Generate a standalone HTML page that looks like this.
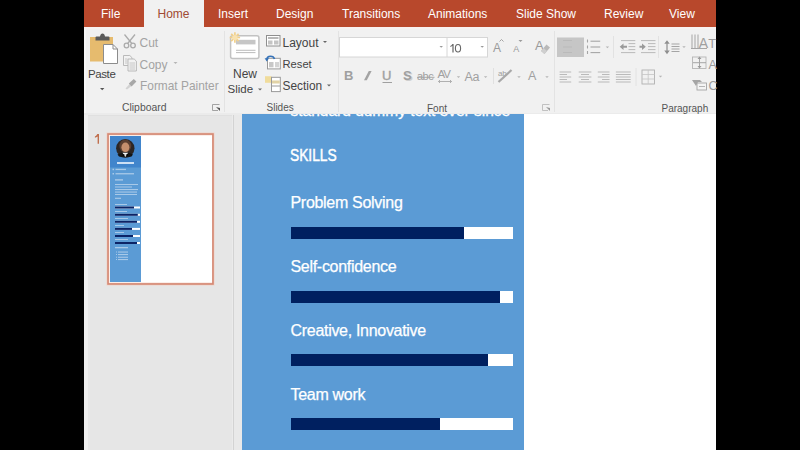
<!DOCTYPE html>
<html><head><meta charset="utf-8">
<style>
*{margin:0;padding:0;box-sizing:border-box}
html,body{width:800px;height:450px;overflow:hidden;background:#000}
body{position:relative;font-family:"Liberation Sans",sans-serif}
.a{position:absolute;white-space:nowrap}
#app{position:absolute;left:84px;top:0;width:632px;height:450px;background:#e6e6e6;overflow:hidden}
#tabs{position:absolute;left:84px;top:0;width:632px;height:27px;background:#b8482c}
.tab{position:absolute;z-index:2;top:7px;font-size:12px;line-height:14px;color:#fff}
#home{position:absolute;left:144px;top:0;width:60px;height:29px;background:#f1f1f1;z-index:1}
#ribbon{position:absolute;left:84px;top:27px;width:632px;height:86px;background:#f1f1f1;border-top:2px solid #f8f1f0}
.rt{font-size:12px;line-height:14px;color:#444}
.dis{color:#a3a3a3}
.gl{font-size:10px;line-height:12px;color:#555}
#pane{position:absolute;left:84px;top:114px;width:150px;height:336px;background:#e6e6e6}
#slide{position:absolute;left:242px;top:114px;width:474px;height:336px;background:#fff}
#blue{position:absolute;left:0;top:0;width:282px;height:336px;background:#5b9bd5;overflow:hidden}
.st{font-size:16px;line-height:18px;color:#fff;letter-spacing:-0.3px;-webkit-text-stroke:0.25px #fff}
.bar{position:absolute;left:49px;width:222px;height:12px;background:#fff}
.bar i{position:absolute;left:0;top:0;height:12px;background:#002060}
svg{position:absolute;left:0;top:0}
</style></head><body>
<div id="app"></div>
<div id="tabs"></div>
<div id="home"></div>
<div class="a tab" style="left:101px">File</div>
<div class="a tab" style="left:157.5px;color:#a04a33">Home</div>
<div class="a tab" style="left:218px">Insert</div>
<div class="a tab" style="left:276px">Design</div>
<div class="a tab" style="left:342px">Transitions</div>
<div class="a tab" style="left:428px">Animations</div>
<div class="a tab" style="left:516px">Slide Show</div>
<div class="a tab" style="left:604px">Review</div>
<div class="a tab" style="left:669px">View</div>

<div id="ribbon"></div><div class="a" style="left:84px;top:29px;width:2px;height:84px;background:#f6f6f6"></div>
<div id="pane"></div><div class="a" style="left:84px;top:113px;width:632px;height:2px;background:#ebebeb"></div><div class="a" style="left:84px;top:115px;width:632px;height:1px;background:#e0e0e0"></div><div class="a" style="left:84px;top:115px;width:4px;height:335px;background:#efefef"></div>
<div class="a" style="left:232px;top:115px;width:1px;height:335px;background:#ebebeb"></div><div class="a" style="left:233px;top:115px;width:1px;height:335px;background:#d3d3d3"></div><div class="a" style="left:234px;top:115px;width:8px;height:335px;background:#e9e9e9"></div>
<div id="slide">
  <div id="blue">
    <div class="a st" style="left:48.5px;top:-12px;font-size:15.5px;letter-spacing:0;-webkit-text-stroke:0.3px #fff">standard dummy text ever since</div>
    <div class="a st" style="left:47.8px;top:33px;font-size:16px;letter-spacing:0;-webkit-text-stroke:0.45px #fff;transform:scaleX(0.86);transform-origin:0 0">SKILLS</div>
    <div class="a st" style="left:48.5px;top:80px">Problem Solving</div>
    <div class="bar" style="top:113px"><i style="width:173px"></i></div>
    <div class="a st" style="left:48.5px;top:144px">Self-confidence</div>
    <div class="bar" style="top:177px"><i style="width:209px"></i></div>
    <div class="a st" style="left:48.5px;top:208px">Creative, Innovative</div>
    <div class="bar" style="top:240px"><i style="width:197px"></i></div>
    <div class="a st" style="left:48.5px;top:272px">Team work</div>
    <div class="bar" style="top:304px"><i style="width:149px"></i></div>
  </div>
</div>

<!-- ribbon text -->
<div class="a rt" style="left:88px;top:67px;font-size:11.5px;letter-spacing:-0.4px">Paste</div>
<div class="a rt dis" style="left:139.5px;top:36px">Cut</div>
<div class="a rt dis" style="left:139.5px;top:58px">Copy</div>
<div class="a rt dis" style="left:140px;top:79px;font-size:11.9px">Format Painter</div>
<div class="a gl" style="left:122px;top:102px;font-size:10.4px">Clipboard</div>

<div class="a rt" style="left:233px;top:67px">New</div>
<div class="a rt" style="left:227.5px;top:81.5px;font-size:11.5px">Slide</div>
<div class="a rt" style="left:282.5px;top:36px">Layout</div>
<div class="a rt" style="left:282.5px;top:57px;font-size:11.2px">Reset</div>
<div class="a rt" style="left:282.5px;top:79px;font-size:11.9px">Section</div>
<div class="a gl" style="left:266.5px;top:102px">Slides</div>

<div class="a gl" style="left:427px;top:102.5px">Font</div>
<div class="a gl" style="left:661.5px;top:102.5px">Paragraph</div>

<svg width="800" height="450" viewBox="0 0 800 450">
<g stroke="#e3e3e3" stroke-width="1">
<line x1="224.5" y1="31" x2="224.5" y2="112"/>
<line x1="338.5" y1="31" x2="338.5" y2="112"/>
<line x1="554.5" y1="31" x2="554.5" y2="112"/>
</g>
<!-- Paste -->
<rect x="90" y="37" width="23" height="24.5" fill="#e6bb6e"/>
<path d="M95.5 40.5 L95.5 37.5 Q95.5 36.5 96.5 36.5 L100 36.5 Q100.5 33.5 102.5 33.5 Q104.5 33.5 105 36.5 L108.5 36.5 Q109.5 36.5 109.5 37.5 L109.5 40.5 Z" fill="#5a5a5a"/>
<path d="M103.5 44.5 L113 44.5 L117.5 49 L117.5 63.5 L103.5 63.5 Z" fill="#fff" stroke="#8c8c8c" stroke-width="1"/>
<path d="M113 44.5 L113 49 L117.5 49" fill="none" stroke="#8c8c8c" stroke-width="1"/>
<path d="M100 88 L104.4 88 L102.2 90.2 Z" fill="#555"/>
<!-- Cut -->
<g fill="none" stroke="#ababab" stroke-width="1.3">
<circle cx="126.5" cy="45.5" r="2.3"/>
<circle cx="133" cy="45.5" r="2.3"/>
<line x1="124.5" y1="34.5" x2="131.8" y2="43.5"/>
<line x1="135" y1="34.5" x2="127.7" y2="43.5"/>
</g>
<!-- Copy -->
<g fill="#f2f2f2" stroke="#b3b3b3" stroke-width="0.9">
<path d="M123.5 55.5 L129.8 55.5 L132 57.7 L132 65.5 L123.5 65.5 Z"/>
<path d="M128 59 L134.2 59 L136.4 61.2 L136.4 71 L128 71 Z"/>
</g>
<g stroke="#bdbdbd" stroke-width="0.8"><line x1="125" y1="59" x2="127.5" y2="59"/><line x1="125" y1="61" x2="127.5" y2="61"/><line x1="125" y1="63" x2="127.5" y2="63"/>
<line x1="129.5" y1="63" x2="135" y2="63"/><line x1="129.5" y1="65" x2="135" y2="65"/><line x1="129.5" y1="67" x2="135" y2="67"/><line x1="129.5" y1="69" x2="135" y2="69"/></g>
<path d="M173.5 62 L177.5 62 L175.5 64 Z" fill="#b5b5b5"/>
<!-- Format painter -->
<path d="M125.5 88.5 L129.5 84 L131.5 86 L127 89.5 Z" fill="#d2d2d2"/>
<path d="M128.8 83.5 L133.8 79 L136.4 81.6 L131.6 86.4 Z" fill="#a8a8a8"/>
<!-- clipboard launcher -->
<g fill="none" stroke="#9a9a9a" stroke-width="0.9"><path d="M219.5 104.5 L212.5 104.5 L212.5 110.5 L218 110.5"/></g>
<path d="M216 107 L220 111 L220 108 Z" fill="#555"/>
<!-- New slide -->
<rect x="230.6" y="35.8" width="28.3" height="22.8" rx="2" fill="#fff" stroke="#c2c2c2" stroke-width="1.5"/>
<rect x="236" y="39.8" width="19.5" height="4.6" fill="#c6c6c6"/>
<g stroke="#b4b4b4" stroke-width="0.9"><line x1="236" y1="50.3" x2="255.5" y2="50.3"/><line x1="236" y1="52.6" x2="255.5" y2="52.6"/></g>
<g stroke="#f1d08c" stroke-width="1.7">
<line x1="234.9" y1="32.3" x2="234.9" y2="42.7"/><line x1="229.7" y1="37.5" x2="240.1" y2="37.5"/>
<line x1="231.2" y1="33.8" x2="238.6" y2="41.2"/><line x1="238.6" y1="33.8" x2="231.2" y2="41.2"/>
</g>
<circle cx="234.9" cy="37.5" r="2.6" fill="#f8e2b0"/>
<path d="M258 88.5 L262 88.5 L260 90.5 Z" fill="#666"/>
<!-- Layout icon -->
<rect x="266.5" y="35.5" width="13.5" height="10.5" fill="#fff" stroke="#8f8f8f" stroke-width="1"/>
<rect x="268" y="37" width="10.5" height="2" fill="#b8b8b8"/>
<rect x="268" y="40.5" width="4.5" height="4" fill="#c4c4c4"/>
<rect x="274" y="40.5" width="4.5" height="4" fill="#c4c4c4"/>
<path d="M323 41 L327 41 L325 43 Z" fill="#666"/>
<!-- Reset icon -->
<rect x="267.5" y="58.3" width="12.8" height="10.6" fill="#fff" stroke="#9a9a9a" stroke-width="1"/>
<rect x="269" y="62" width="4.5" height="5.3" fill="#c8c8c8"/>
<rect x="275" y="62" width="4" height="5.3" fill="#d4d4d4"/>
<path d="M266.8 59.5 Q267 56.2 270.5 56.2 Q273.8 56.2 274.5 59" fill="none" stroke="#3572b8" stroke-width="1.6"/>
<path d="M264.6 58.2 L269 58.2 L266.8 61.6 Z" fill="#3572b8"/>
<!-- Section icon -->
<rect x="265" y="76.2" width="6.5" height="6.6" fill="#f0dc9c"/>
<rect x="271.5" y="77.3" width="8.8" height="14.3" fill="#fff" stroke="#9a9a9a" stroke-width="1"/>
<rect x="272" y="80.5" width="7.8" height="3" fill="#e2d3a6"/>
<line x1="271.5" y1="86" x2="280.3" y2="86" stroke="#9a9a9a" stroke-width="1"/>
<path d="M327 84.5 L331 84.5 L329 86.5 Z" fill="#666"/>
<!-- Font name / size boxes -->
<rect x="339.5" y="37.5" width="148" height="19.5" fill="#fff" stroke="#d6d6d6" stroke-width="1"/>
<line x1="447" y1="37.5" x2="447" y2="57" stroke="#d6d6d6" stroke-width="1"/>
<path d="M439.5 46 L443 46 L441.2 47.8 Z" fill="#999"/>
<path d="M480.5 46 L484 46 L482.2 47.8 Z" fill="#999"/>

<path d="M452.4 44 L453.6 44 L453.6 52.5 L452.4 52.5 L452.4 45.8 Q451.4 46.7 450.3 47.1 L450.3 46 Q451.7 45.3 452.4 44 Z" fill="#666"/><ellipse cx="458" cy="48.25" rx="2.6" ry="3.75" fill="none" stroke="#666" stroke-width="1.1"/>
<!-- Font row1 -->
<g font-family="Liberation Sans" fill="#9a9a9a">
<text x="493" y="51.5" font-size="12">A</text>
<text x="513.3" y="51.5" font-size="9">A</text>
<text x="535" y="50" font-size="13">A</text>
</g>
<path d="M499.5 41.5 L501.5 39.5 L503.5 41.5" fill="none" stroke="#9a9a9a" stroke-width="0.9"/>
<path d="M518.5 40 L522.5 40 L520.5 42 Z" fill="#9a9a9a"/>
<path d="M541 51 L546.5 44.5 L550 47.5 L544.5 54 Z" fill="#b9b9b9"/>
<path d="M541 51 L543.5 48 L547 51 L544.5 54 Z" fill="#cfcfcf"/>
<!-- Font row2 -->
<g font-family="Liberation Sans" fill="#a0a0a0">
<text x="344" y="80.3" font-size="13" font-weight="bold">B</text>

<text x="382" y="80.3" font-size="13" stroke="#a0a0a0" stroke-width="0.4">U</text>
<text x="404.3" y="81.3" font-size="13" font-weight="bold" fill="#cfcfcf">S</text>
<text x="403" y="80.3" font-size="13" font-weight="bold">S</text>
<text x="417" y="80.3" font-size="11" letter-spacing="-0.5">abc</text>
<text x="437.5" y="78.3" font-size="11.5" letter-spacing="-1">AV</text>
<text x="464.5" y="80.8" font-size="12.5" letter-spacing="-0.3">Aa</text>
<text x="498" y="76" font-size="8" letter-spacing="-0.3">ab</text>
<text x="528" y="80.4" font-size="12.5">A</text>
</g>
<path d="M364 80.3 L366.8 80.3 L371.6 71 L368.8 71 Z" fill="#a3a3a3"/>
<line x1="382.5" y1="82.5" x2="392" y2="82.5" stroke="#a0a0a0" stroke-width="1"/>
<line x1="417" y1="77.3" x2="434.5" y2="77.3" stroke="#a0a0a0" stroke-width="0.9"/>
<path d="M438.5 81.5 L451.5 81.5 M440 80 L438.5 81.5 L440 83 M450 80 L451.5 81.5 L450 83" fill="none" stroke="#a8a8a8" stroke-width="0.9"/>
<path d="M498.5 82 L511.5 70" stroke="#a8a8a8" stroke-width="2.2"/>
<g fill="#b5b5b5">
<path d="M456.8 76.2 L460.2 76.2 L458.5 78 Z"/>
<path d="M483.9 76.2 L487.3 76.2 L485.6 78 Z"/>
<path d="M517.3 76.2 L520.7 76.2 L519 78 Z"/>
<path d="M545.3 76.2 L548.7 76.2 L547 78 Z"/>
</g>
<line x1="493.5" y1="68" x2="493.5" y2="84" stroke="#e0e0e0" stroke-width="1"/>
<g fill="none" stroke="#b5b5b5" stroke-width="0.8"><path d="M549.5 104.5 L542.5 104.5 L542.5 110.5 L548 110.5"/></g>
<path d="M546 107 L550 111 L550 108 Z" fill="#999"/>
<!-- Paragraph row1 -->
<rect x="557" y="37.5" width="27" height="19.5" fill="#c6c6c6"/>
<g stroke="#b8b8b8" stroke-width="0.8"><line x1="563" y1="40.5" x2="572" y2="40.5"/><line x1="563" y1="47" x2="572" y2="47"/><line x1="563" y1="52.5" x2="572" y2="52.5"/></g>
<g stroke="#a5a5a5" stroke-width="1.1">
<line x1="590.5" y1="41.2" x2="600.2" y2="41.2"/><line x1="590.5" y1="47" x2="600.2" y2="47"/><line x1="590.5" y1="52.6" x2="600.2" y2="52.6"/>
<line x1="587.5" y1="39.5" x2="587.5" y2="42.5"/><line x1="587.5" y1="45.5" x2="587.5" y2="48.5"/><line x1="587.5" y1="51" x2="587.5" y2="54"/>
</g>
<path d="M605.7 46.5 L609.1 46.5 L607.4 48.3 Z" fill="#b5b5b5"/>
<line x1="613.5" y1="36" x2="613.5" y2="58" stroke="#e2e2e2" stroke-width="1"/>
<g stroke="#b3b3b3" stroke-width="0.9">
<line x1="621" y1="40.6" x2="635.3" y2="40.6"/><line x1="628.5" y1="43.6" x2="635.3" y2="43.6"/><line x1="628.5" y1="46.6" x2="635.3" y2="46.6"/><line x1="628.5" y1="49.6" x2="635.3" y2="49.6"/><line x1="621" y1="52.6" x2="635.3" y2="52.6"/>
<line x1="641" y1="40.6" x2="655.5" y2="40.6"/><line x1="648" y1="43.6" x2="655.5" y2="43.6"/><line x1="648" y1="46.6" x2="655.5" y2="46.6"/><line x1="648" y1="49.6" x2="655.5" y2="49.6"/><line x1="641" y1="52.6" x2="655.5" y2="52.6"/>
</g>
<path d="M619.7 46.7 L623.5 43.5 L623.5 45.7 L627 45.7 L627 47.7 L623.5 47.7 L623.5 49.9 Z" fill="#9a9a9a"/>
<path d="M645.8 46.7 L642 43.5 L642 45.7 L639.5 45.7 L639.5 47.7 L642 47.7 L642 49.9 Z" fill="#9a9a9a"/>
<line x1="658.5" y1="36" x2="658.5" y2="58" stroke="#e2e2e2" stroke-width="1"/>
<path d="M664.3 43.8 L667 40.2 L669.7 43.8 Z M664.3 50.6 L667 54.3 L669.7 50.6 Z" fill="#8e8e8e"/>
<g stroke="#a5a5a5" stroke-width="1">
<line x1="667" y1="43" x2="667" y2="51.5" stroke="#959595" stroke-width="1.3"/>
<line x1="671.5" y1="44" x2="679.5" y2="44"/><line x1="671.5" y1="46.5" x2="679.5" y2="46.5"/><line x1="671.5" y1="49" x2="679.5" y2="49"/><line x1="671.5" y1="51.5" x2="679.5" y2="51.5"/>
</g>
<path d="M682.3 46.2 L685.7 46.2 L684 48 Z" fill="#b5b5b5"/>
<!-- text direction -->
<g stroke="#a5a5a5" stroke-width="1">
<line x1="692" y1="34.5" x2="692" y2="48"/><line x1="695" y1="34.5" x2="695" y2="48"/><line x1="698" y1="34.5" x2="698" y2="48"/>
<line x1="691" y1="48.5" x2="707" y2="48.5"/>
</g>
<text x="698.8" y="48" font-family="Liberation Sans" font-size="14" fill="#a0a0a0">A</text>
<text x="708.3" y="47.5" font-family="Liberation Sans" font-size="13" fill="#9a9a9a">T</text>
<!-- align text -->
<rect x="692.5" y="57" width="13.5" height="11.5" fill="none" stroke="#b5b5b5" stroke-width="0.9"/>
<g stroke="#a5a5a5" stroke-width="1"><line x1="699.5" y1="57" x2="699.5" y2="68"/><line x1="693" y1="62.7" x2="706" y2="62.7"/></g>
<path d="M697.5 59 L699.5 56.5 L701.5 59 Z M697.5 66 L699.5 68.5 L701.5 66 Z" fill="#9a9a9a"/>
<text x="708.5" y="68.5" font-family="Liberation Sans" font-size="12.5" fill="#9a9a9a">A</text>
<!-- Paragraph row2 -->
<g stroke="#b3b3b3" stroke-width="0.9">
<line x1="559.6" y1="72" x2="571.2" y2="72"/><line x1="559.6" y1="74.5" x2="567" y2="74.5"/><line x1="559.6" y1="77" x2="571.2" y2="77"/><line x1="559.6" y1="79.5" x2="567" y2="79.5"/><line x1="559.6" y1="82" x2="571.2" y2="82"/>
<line x1="578.7" y1="72" x2="591.4" y2="72"/><line x1="581" y1="74.5" x2="589" y2="74.5"/><line x1="578.7" y1="77" x2="591.4" y2="77"/><line x1="581" y1="79.5" x2="589" y2="79.5"/><line x1="578.7" y1="82" x2="591.4" y2="82"/>
<line x1="597.8" y1="72" x2="609.5" y2="72"/><line x1="602" y1="74.5" x2="609.5" y2="74.5"/><line x1="597.8" y1="77" x2="609.5" y2="77"/><line x1="602" y1="79.5" x2="609.5" y2="79.5"/><line x1="597.8" y1="82" x2="609.5" y2="82"/>
<line x1="615.9" y1="72" x2="630.7" y2="72"/><line x1="615.9" y1="74.5" x2="630.7" y2="74.5"/><line x1="615.9" y1="77" x2="630.7" y2="77"/><line x1="615.9" y1="79.5" x2="630.7" y2="79.5"/><line x1="615.9" y1="82" x2="630.7" y2="82"/>
</g>
<line x1="636" y1="68" x2="636" y2="86" stroke="#e2e2e2" stroke-width="1"/>
<rect x="642" y="70" width="12.5" height="14" fill="none" stroke="#b0b0b0" stroke-width="0.9"/>
<g stroke="#c5c5c5" stroke-width="0.8"><line x1="648.2" y1="70" x2="648.2" y2="84"/><line x1="642" y1="74.5" x2="654.5" y2="74.5"/><line x1="642" y1="79" x2="654.5" y2="79"/></g>
<path d="M658.8 75.7 L662.2 75.7 L660.5 77.5 Z" fill="#b5b5b5"/>
<!-- smartart -->
<path d="M692 80 L700 80 L702 82 L698 82 L696 86 Z" fill="#a5a5a5"/>
<rect x="697" y="83" width="9.5" height="7" fill="#f4f4f4" stroke="#a5a5a5" stroke-width="0.9"/>
<line x1="699" y1="86.5" x2="705" y2="86.5" stroke="#a5a5a5" stroke-width="0.8"/>
<text x="708.5" y="89.5" font-family="Liberation Sans" font-size="12.5" fill="#9a9a9a">C</text>

<!-- thumbnail -->
<rect x="106.5" y="132.5" width="108" height="153" fill="#f0d2c8"/><rect x="107.2" y="133.2" width="106.6" height="151.6" fill="#d58a75"/>
<rect x="108.9" y="134.9" width="103.2" height="148.2" fill="#fbeee9"/>
<rect x="110" y="136" width="102" height="146" fill="#fff"/>
<rect x="110" y="136" width="31" height="146" fill="#5b9bd5"/>
<rect x="110" y="136" width="31" height="31.5" fill="#4185cc"/>
<circle cx="125.3" cy="148.2" r="9.2" fill="#2c2624"/>
<ellipse cx="125.3" cy="146" rx="6" ry="6.5" fill="#5a3e30"/>
<ellipse cx="125.4" cy="147.3" rx="4" ry="4.8" fill="#c48e6c"/>
<path d="M117.5 154.5 Q125.3 150.5 133 154.5 L131.5 156.5 Q125.3 158.5 119 156.5 Z" fill="#151515"/>
<path d="M122.5 152.8 L125.3 157 L128.1 152.8 Z" fill="#f4f4f4"/>
<path d="M122.8 154 L125.3 155 L127.8 154 L127.8 156 L125.3 155 L122.8 156 Z" fill="#000"/>
<rect x="117" y="162" width="17" height="2" fill="#e8f0fa" opacity="0.85"/>
<g fill="#dce8f6" opacity="0.6">
<rect x="112.5" y="168.7" width="1.5" height="1.5"/><rect x="115.5" y="168.8" width="10.5" height="1.3"/>
<rect x="112.5" y="173" width="1.5" height="1.5"/><rect x="115.5" y="173.1" width="18.5" height="1.3"/>
<rect x="115" y="179.2" width="8" height="1.4"/>
<rect x="115" y="184" width="23" height="1"/><rect x="115" y="186.5" width="17" height="1"/><rect x="115" y="189" width="23" height="1.1"/><rect x="115" y="191.5" width="22" height="1.1"/><rect x="115" y="194" width="22" height="1"/>
<rect x="115" y="197.7" width="6" height="1.2"/>
<rect x="115" y="204" width="12" height="1"/><rect x="115" y="211" width="12" height="1"/><rect x="115" y="218" width="13" height="1"/><rect x="115" y="225" width="9" height="1"/><rect x="115" y="232" width="9" height="1"/><rect x="115" y="239" width="13" height="1"/>
<rect x="115" y="247" width="13" height="1.3"/>
<rect x="116" y="251.5" width="1" height="1"/><rect x="118" y="251.5" width="10" height="1.1"/>
<rect x="116" y="254" width="1" height="1"/><rect x="118" y="254" width="10" height="1.1"/>
<rect x="116" y="256.7" width="1" height="1"/><rect x="118" y="256.7" width="10" height="1.1"/>
<rect x="116" y="259" width="1" height="1"/><rect x="118" y="259" width="10" height="1.1"/>
</g>
<g fill="#fff">
<rect x="115" y="206.5" width="25" height="2"/><rect x="115" y="213.8" width="25" height="2"/><rect x="115" y="220.8" width="25" height="2"/><rect x="115" y="227.9" width="25" height="2"/><rect x="115" y="235" width="25" height="2"/><rect x="115" y="242" width="25" height="2"/>
</g>
<g fill="#0c2466">
<rect x="115" y="206.5" width="19" height="2"/><rect x="115" y="213.8" width="22.8" height="2"/><rect x="115" y="220.8" width="22" height="2"/><rect x="115" y="227.9" width="17" height="2"/><rect x="115" y="235" width="18" height="2"/><rect x="115" y="242" width="22" height="2"/>
</g>
<path d="M97.3 134 L99 134 L99 143.8 L97.6 143.8 L97.6 136.4 Q96.3 137.4 94.9 137.8 L94.9 136.5 Q96.5 135.7 97.3 134 Z" fill="#c0704f"/>
</svg>
</body></html>
